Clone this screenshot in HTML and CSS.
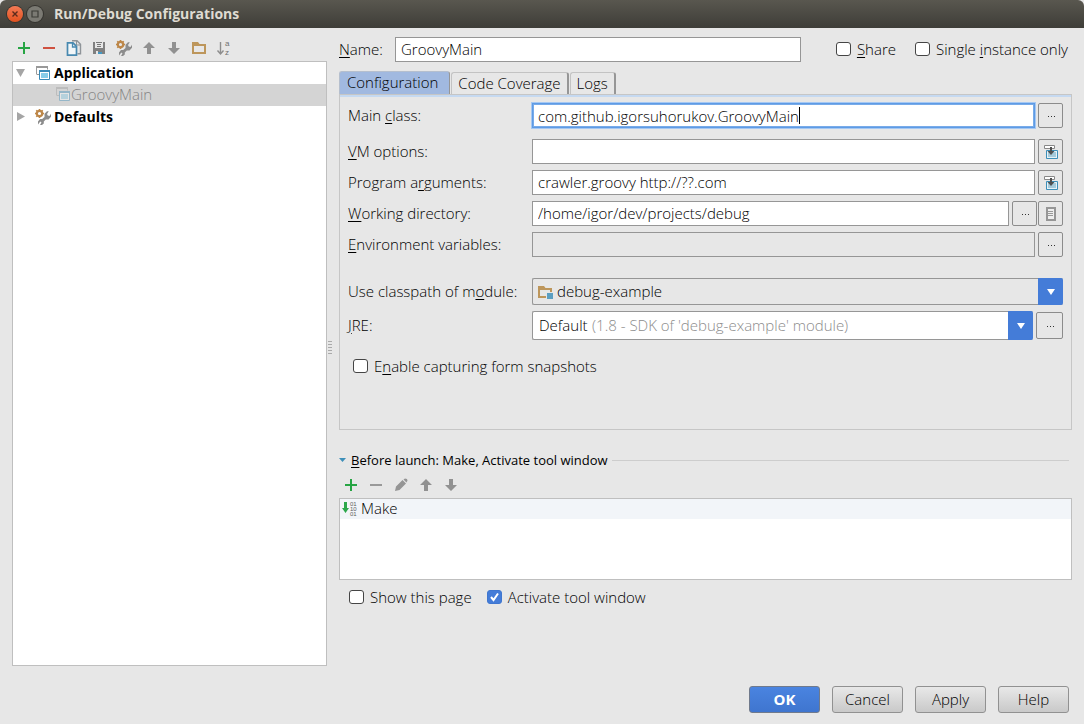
FILE: index.html
```html
<!DOCTYPE html>
<html lang="en">
<head>
<meta charset="utf-8">
<meta name="viewport" content="width=device-width, initial-scale=1">
<title>Run/Debug Configurations</title>
<link rel="stylesheet" href="styles.css">
</head>
<body>
<svg class="sprite" aria-hidden="true">
  <symbol id="plus" viewBox="0 0 16 16"><path d="M7 2h2v5h5v2H9v5H7V9H2V7h5z" fill="#27a544"/></symbol>
  <symbol id="minus" viewBox="0 0 16 16"><path d="M2 7h12v2H2z" fill="currentColor"/></symbol>
  <symbol id="up" viewBox="0 0 16 16"><path d="M8 2l6 6h-4v6H6V8H2z" fill="#919191"/></symbol>
  <symbol id="down" viewBox="0 0 16 16"><path d="M8 14l6-6h-4V2H6v6H2z" fill="#919191"/></symbol>
  <symbol id="copy" viewBox="0 0 16 16"><path d="M6 .8h5l3.500 3.500v9.500h-3" fill="none" stroke="#8f9499" stroke-width="1.400"/><path d="M10.500 1v4h4" fill="none" stroke="#8f9499"/><path d="M1.500 2.800h5.500l3.500 3.500v8.900h-9z" fill="#f2f6f8" stroke="#4889b0" stroke-width="1.700"/><path d="M6.500 3v4h4" fill="none" stroke="#4889b0" stroke-width="1.300"/></symbol>
  <symbol id="save" viewBox="0 0 16 16"><path d="M2 2h2v6h8V2h2v12h-2v-4H4v4H2z" fill="#808080"/><path d="M5 2h6v1H5zM6 4h4v1H6zM6 6h4v1H6z" fill="#777"/><path d="M4 8h8v6H4z" fill="#808080"/><path d="M5 11h2v3H5z" fill="#e7e7e7"/><path d="M7 12h4v2H7z" fill="#4398c4"/></symbol>
  <symbol id="tools" viewBox="0 0 16 16"><circle cx="4.500" cy="4.500" r="2.700" fill="none" stroke="#bd8749" stroke-width="2.200"/><path d="M4.500 0v1.500M4.500 7.500V9M0 4.500h1.500M7.500 4.500H9M1.300 1.300l1 1M7.700 1.300l-1 1M1.300 7.700l1-1" stroke="#bd8749" stroke-width="1.600"/><path d="M3 15.500v-3l2-2.500h2.200l2.300-2V4.800L12 2.200h1.800L12 5l.8 1.600 1.700.4L16 4.800v3L13.500 10.500h-2.700l-2 2v2L7 16H5l1.500-2.500-1.200-1z" fill="#8c8c8c"/></symbol>
  <symbol id="folder" viewBox="0 0 16 16"><path fill-rule="evenodd" d="M1 2h6l1.500 2H15v10H1zM3 6v6h10V6z" fill="#bd965b"/></symbol>
  <symbol id="app" viewBox="0 0 16 16"><path d="M1.500 9.500v-8h11v3M2 9.500h2" fill="none" stroke="#999"/><path d="M1 1h12v2H1z" fill="#999"/><path d="M4.500 5.500h10v9h-10z" fill="#fff" stroke="#398ab7"/><path d="M4 5h11v2H4z" fill="#398ab7"/><path d="M6 8h7v5H6z" fill="#87cde9"/></symbol>
  <symbol id="insert" viewBox="0 0 16 16"><path d="M1.500 1.500h10v3h-10z" fill="#fff" stroke="#888"/><path d="M3.500 6.500h11v8h-11z" fill="#e7f2f7" stroke="#3d8fb9"/><path d="M5 8h8v5H5z" fill="#a5cadb"/><path d="M7 3h2v4h2.500L8 11 4.500 7H7z" fill="#505050"/></symbol>
  <symbol id="dots" viewBox="0 0 16 16"><path d="M5 8h1v1H5zM8 8h1v1H8zM11 8h1v1h-1z" fill="#333"/></symbol>
</svg>

<header class="titlebar">
  <button class="wm wm-close" aria-label="Close"><svg viewBox="0 0 16 16"><path d="M5.500 5.500l5 5m0-5l-5 5" stroke="#5b2b1c" stroke-width="1.400"/></svg></button>
  <button class="wm" aria-label="Maximize"><svg viewBox="0 0 16 16"><path d="M5 5h6v6H5z" fill="none" stroke="#3d3c37" stroke-width="1.200"/></svg></button>
  <h1>Run/Debug Configurations</h1>
</header>

<main class="content">
  <aside class="sidebar">
    <div class="toolbar">
      <button aria-label="Add"><svg><use href="#plus"/></svg></button>
      <button class="red" aria-label="Remove"><svg><use href="#minus"/></svg></button>
      <button aria-label="Copy"><svg><use href="#copy"/></svg></button>
      <button aria-label="Save"><svg><use href="#save"/></svg></button>
      <button aria-label="Edit defaults"><svg><use href="#tools"/></svg></button>
      <button aria-label="Move up"><svg><use href="#up"/></svg></button>
      <button aria-label="Move down"><svg><use href="#down"/></svg></button>
      <button aria-label="New folder"><svg><use href="#folder"/></svg></button>
      <button aria-label="Sort"><svg class="sort" viewBox="0 0 16 16"><path d="M4.500 2v12M1.500 10.500l3 3.500 3-3.500" fill="none" stroke="#8d8d8d" stroke-width="1.400"/><text class="az" x="9" y="6">a</text><text class="az" x="9" y="15">z</text></svg></button>
    </div>
    <ul class="tree">
      <li class="node"><svg class="twist" viewBox="0 0 10 10"><path d="M0 1h9L4.500 9z" fill="#a5a5a5"/></svg><svg class="icon"><use href="#app"/></svg><b>Application</b></li>
      <li class="node leaf"><svg class="icon"><use href="#app"/></svg><span>GroovyMain</span></li>
      <li class="node"><svg class="twist" viewBox="0 0 10 10"><path d="M1 0l8 4.500L1 9z" fill="#a5a5a5"/></svg><svg class="icon"><use href="#tools"/></svg><b>Defaults</b></li>
    </ul>
  </aside>
  <div class="splitter"></div>
  <section class="editor">
    <div class="name-row">
      <label for="name"><u>N</u>ame:</label>
      <input class="text name" id="name" value="GroovyMain">
      <label class="check"><input type="checkbox"><span><u>S</u>hare</span></label>
      <label class="check"><input type="checkbox"><span>Single <u>i</u>nstance only</span></label>
    </div>
    <div class="tabs" role="tablist">
      <button class="tab active" role="tab" aria-selected="true">Configuration</button>
      <button class="tab" role="tab">Code Coverage</button>
      <button class="tab" role="tab">Logs</button>
    </div>
    <div class="panel">
      <div class="row first">
        <label for="mc">Main <u>c</u>lass:</label>
        <div class="text focused"><input id="mc" value="com.github.igorsuhorukov.GroovyMain"><span class="caret"></span></div>
        <button class="side" aria-label="Browse class"><svg><use href="#dots"/></svg></button>
      </div>
      <div class="row">
        <label for="vm"><u>V</u>M options:</label>
        <input class="text" id="vm">
        <button class="side" aria-label="Expand"><svg><use href="#insert"/></svg></button>
      </div>
      <div class="row">
        <label for="pa">Program a<u>r</u>guments:</label>
        <input class="text" id="pa" value="crawler.groovy http://??.com">
        <button class="side" aria-label="Expand"><svg><use href="#insert"/></svg></button>
      </div>
      <div class="row">
        <label for="wd"><u>W</u>orking directory:</label>
        <input class="text" id="wd" value="/home/igor/dev/projects/debug">
        <div class="pair">
          <button class="side" aria-label="Browse directory"><svg><use href="#dots"/></svg></button>
          <button class="side" aria-label="Insert macro"><svg viewBox="0 0 16 16"><path d="M3 1h10v14H3z" fill="#969696"/><path d="M5 3h6v10H5z" fill="#eee"/><path d="M5 5.500h5M5 7.500h5M5 9.500h5" stroke="#999"/></svg></button>
        </div>
      </div>
      <div class="row">
        <label for="ev"><u>E</u>nvironment variables:</label>
        <input class="text disabled" id="ev" readonly>
        <button class="side" aria-label="Edit variables"><svg><use href="#dots"/></svg></button>
      </div>
      <div class="row module">
        <label for="mod">Use classpath of m<u>o</u>dule:</label>
        <div class="combo gray">
          <svg class="combo-icon" viewBox="0 0 16 16"><path fill-rule="evenodd" d="M1 2h6l1.500 2H15v10H1zM3 6v6h10V6z" fill="#bd965b"/><path d="M9 8h7v7H9z" fill="#e7e7e7"/><path d="M10 9h6v6h-6z" fill="#5b9fc2"/></svg>
          <select id="mod"><option>debug-example</option></select>
          <span class="arrow"></span>
        </div>
      </div>
      <div class="row">
        <label for="jre"><u>J</u>RE:</label>
        <div class="combo">
          <select id="jre" class="fit"><option>Default</option></select>
          <span class="hint">(1.8 - SDK of 'debug-example' module)</span>
          <span class="arrow"></span>
        </div>
        <button class="side wide" aria-label="Browse JRE"><svg><use href="#dots"/></svg></button>
      </div>
      <label class="check snap"><input type="checkbox"><span>E<u>n</u>able capturing form snapshots</span></label>
    </div>
    <h2 class="before"><svg viewBox="0 0 8 8"><path d="M0 2h7L3.500 6z" fill="#3d8fb9"/></svg><span><u>B</u>efore launch: Make, Activate tool window</span></h2>
    <div class="toolbar tasks-bar">
      <button aria-label="Add task"><svg><use href="#plus"/></svg></button>
      <button class="dim" aria-label="Remove task"><svg><use href="#minus"/></svg></button>
      <button aria-label="Edit task"><svg viewBox="0 0 16 16"><path d="M2 14l1-4.500L9.500 3l3.500 3.500L6.500 13zM10.500 2.500L12 1.500l2 .5.500 1.500-1 2z" fill="#959595"/></svg></button>
      <button aria-label="Move task up"><svg><use href="#up"/></svg></button>
      <button aria-label="Move task down"><svg><use href="#down"/></svg></button>
    </div>
    <ul class="tasks">
      <li><svg class="icon" viewBox="0 0 16 16"><path d="M3 1h3v6h2l-3.500 5L1 7h2z" fill="#2da84c"/><text class="bits" x="9" y="5">01</text><text class="bits" x="9" y="10">10</text><text class="bits" x="9" y="15">01</text></svg><span>Make</span></li>
    </ul>
    <div class="options">
      <label class="check"><input type="checkbox"><span>Show this page</span></label>
      <label class="check"><input type="checkbox" checked><span>Activate tool window</span></label>
    </div>
  </section>
</main>
<footer class="footer">
  <button class="btn primary">OK</button>
  <button class="btn">Cancel</button>
  <button class="btn">Apply</button>
  <button class="btn">Help</button>
</footer>
</body>
</html>
```
FILE: styles.css
```css
* { box-sizing: border-box; }
body {
  margin: 0;
  min-height: 100vh;
  display: flex;
  flex-direction: column;
  background: #e7e7e7;
  color: #000;
  font: 300 15px/20px "Open Sans", "Noto Sans", sans-serif;
}
button, input, select { font: inherit; color: inherit; margin: 0; }
button { padding: 0; border: 0; background: none; }
svg { display: block; width: 16px; height: 16px; flex: none; }
u { text-decoration-thickness: 1px; text-underline-offset: 2px; }
ul { list-style: none; margin: 0; padding: 0; }
.sprite { position: absolute; width: 0; height: 0; }
.sort { overflow: visible; }
.az { font: 400 8px "Liberation Sans", sans-serif; fill: #707070; }
.bits { font: 400 6px "Liberation Sans", sans-serif; fill: #606060; }

.titlebar {
  display: flex;
  align-items: center;
  gap: 4px;
  height: 28px;
  padding: 0 7px;
  background: linear-gradient(#59574f, #3e3d38);
  border-radius: 6px 6px 0 0;
}
.titlebar h1 { margin: 0 0 0 7px; font-size: 14px; font-weight: 700; color: #dfdbd2; }
.wm {
  width: 16px;
  height: 16px;
  border-radius: 50%;
  background: #7b7a73;
  box-shadow: 0 0 0 1px #35342f;
}
.wm-close { background: linear-gradient(#f37a55, #e2521f); }

.content { flex: 1; display: flex; padding: 0 12px; }
.sidebar { flex: 0 0 315px; display: flex; flex-direction: column; }
.toolbar { display: flex; gap: 9px; padding: 12px 4px 5px; }
.red { color: #cf5140; }
.dim { color: #999; }
.tree { flex: 1; background: #fff; border: 1px solid #bfbfbf; }
.node { display: flex; align-items: center; height: 22px; padding-left: 3px; }
.node b { font-weight: 700; font-size: 14px; margin-left: 3px; }
.twist { width: 10px; height: 10px; margin-right: 9px; }
.leaf { padding: 0 0 2px 42px; background: #d4d4d4; color: #848484; }
.leaf .icon { opacity: .4; }
.splitter {
  align-self: center;
  width: 4px;
  height: 14px;
  margin: 0 7px 0 1px;
  background: radial-gradient(circle, #aaa 0 1px, transparent 1px) 0 0 / 2px 3px;
}

.editor { flex: 1; min-width: 0; display: flex; flex-direction: column; }
.name-row { display: flex; align-items: center; padding: 9px 4px 9px 0; height: 43px; }
.name-row > label { padding-bottom: 2px; }
.name-row > label:first-child { width: 56px; }
.text {
  flex: 1;
  min-width: 0;
  height: 25px;
  padding: 0 5px 2px;
  border: 1px solid #969696;
  border-radius: 0;
  background: #fff;
  outline: 0;
}
.name-row .check { margin-left: 19px; }
.name-row .name { margin-right: 16px; }
.check { display: flex; align-items: center; gap: 6px; }
.check input {
  appearance: none;
  flex: none;
  width: 15px;
  height: 14px;
  border: 1px solid #454545;
  border-radius: 3px;
  background: #fff;
}
.check input:checked {
  border-color: #3f76cf;
  background: #447cd8 url("data:image/svg+xml,%3Csvg xmlns='http://www.w3.org/2000/svg' viewBox='0 0 13 12'%3E%3Cpath d='M3 6l2.500 3L10 2.500' fill='none' stroke='white' stroke-width='2'/%3E%3C/svg%3E") center / 13px 12px no-repeat;
}

.tabs { display: flex; align-items: flex-end; gap: 1px; height: 23px; }
.tab {
  height: 22px;
  padding: 0 6px 2px;
  border: 1px solid #c3c3c3;
  border-right: 2px solid #969696;
  border-bottom: 0;
  border-radius: 3px 3px 0 0;
}
.tab.active { height: 23px; padding: 0 11px 4px 7px; background: #a1b9e0; border-color: #b5bfce; border-right: 1px solid #969696; }
.panel {
  height: 336px;
  padding: 7px 8px 0;
  border: 1px solid #c6c6c6;
  box-shadow: inset 0 2px #c5d9f1;
}
.row { display: flex; align-items: center; gap: 3px; margin-bottom: 6px; }
.row > label { width: 181px; flex: none; padding-bottom: 2px; }
.row.first { padding-top: 1px; margin-bottom: 11px; }
.focused {
  display: flex;
  align-items: center;
  padding-bottom: 0;
  border-color: #5e9be5;
  box-shadow: inset 0 0 0 1px #78abe9, 0 0 0 1px #a5c8f3;
}
.focused input { field-sizing: content; border: 0; padding: 0; outline: 0; background: none; }
.caret { width: 1px; height: 17px; background: #000; }
.disabled { background: #e7e7e7; }
.side {
  flex: none;
  display: flex;
  align-items: center;
  justify-content: center;
  width: 25px;
  height: 25px;
  border: 1px solid #8c8c8c;
  border-radius: 2px;
}
.side.wide { width: 27px; height: 27px; }
.pair { display: flex; gap: 1px; }
.combo {
  flex: 1;
  display: flex;
  align-items: center;
  height: 29px;
  border: 1px solid #969696;
  border-right: 0;
  border-radius: 2px;
  background: #fff;
}
.combo.gray { height: 27px; background: #e7e7e7; }
.combo-icon { margin-left: 4px; }
.combo select { appearance: none; flex: 1; border: 0; padding: 0 4px 2px; background: none; outline: 0; }
.combo select.fit { flex: none; padding: 0 4px 2px 6px; }
.hint { flex: 1; padding-bottom: 2px; color: #8c8c8c; white-space: nowrap; }
.arrow {
  align-self: stretch;
  display: grid;
  place-items: center;
  width: 25px;
  margin: -1px 0;
  background: #447cd8;
  border-radius: 0 2px 2px 0;
}
.arrow::before { content: ""; border: 4px solid transparent; border-top: 6px solid #fff; border-bottom: 0; }
.row.module { margin-top: 21px; }
.snap { margin: 16px 5px 0; }

.before { display: flex; align-items: center; gap: 4px; margin: 20px 3px 0 0; font-size: 13px; font-weight: 400; }
.before svg { width: 8px; height: 8px; }
.before::after { content: ""; flex: 1; height: 1px; background: #cdcdcd; }
.tasks-bar { padding: 7px 4px 5px; }
.tasks { height: 82px; background: #fff; border: 1px solid #bfbfbf; }
.tasks li { display: flex; align-items: center; gap: 4px; height: 20px; padding-left: 1px; background: #f2f5f9; }
.tasks span { padding-bottom: 2px; }
.options { display: flex; gap: 15px; padding: 7px 10px 0; height: 86px; align-items: flex-start; }

.footer { display: flex; justify-content: flex-end; gap: 12px; padding: 20px 15px 11px; }
.btn {
  width: 71px;
  height: 27px;
  padding-bottom: 2px;
  border: 1px solid #919191;
  border-radius: 3px;
  background: linear-gradient(#e8e8e8, #c9c9c9);
}
.primary { background: linear-gradient(#4a84e0, #3f75cf); border-color: #707a8c; color: #fff; font-weight: 700; }
```
